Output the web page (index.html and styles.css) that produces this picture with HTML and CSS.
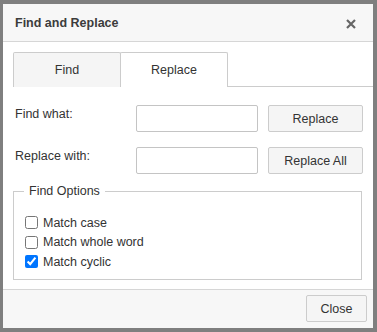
FILE: index.html
```html
<!DOCTYPE html>
<html lang="en">
<head>
    <meta charset="UTF-8">
    <meta name="viewport" content="width=device-width, initial-scale=1.0">
    <title>Find and Replace</title>
    <link rel="stylesheet" href="styles.css">
</head>
<body>
    <div class="overlay">
        <div class="dialog">
            <div class="dialog-header">
                <span class="dialog-title">Find and Replace</span>
                <svg class="dialog-close" width="10" height="10" viewBox="0 0 10 10">
                    <path d="M1 1 L9 9 M9 1 L1 9" stroke="#666" stroke-width="2.2" fill="none"/>
                </svg>
            </div>

            <div class="dialog-body">
                <ul class="tabs">
                    <li class="tab">Find</li>
                    <li class="tab active">Replace</li>
                </ul>

                <div class="form-row">
                    <label for="find-what">Find what:</label>
                    <input type="text" id="find-what">
                    <button>Replace</button>
                </div>
                <div class="form-row">
                    <label for="replace-with">Replace with:</label>
                    <input type="text" id="replace-with">
                    <button>Replace All</button>
                </div>

                <fieldset class="options">
                    <legend>Find Options</legend>
                    <label class="check"><input type="checkbox"> Match case</label>
                    <label class="check"><input type="checkbox"> Match whole word</label>
                    <label class="check"><input type="checkbox" checked> Match cyclic</label>
                </fieldset>
            </div>

            <div class="dialog-footer">
                <button>Close</button>
            </div>
        </div>
    </div>
</body>
</html>
```

FILE: styles.css
```css
html, body {
    margin: 0;
    height: 100%;
}
body {
    font-family: "Liberation Sans", Arial, sans-serif;
    font-size: 12.5px;
    color: #333;
    background-color: #7f7f7f;
}
.overlay {
    padding: 4px 4px 4px 3px;
}
.dialog {
    width: 370px;
    height: 324px;
    background-color: #fff;
    display: flex;
    flex-direction: column;
}
.dialog-header {
    height: 37px;
    background-color: #f7f7f7;
    border-bottom: 1px solid #d6d6d6;
    display: flex;
    align-items: center;
    justify-content: space-between;
    padding: 0 17px 0 12px;
}
.dialog-title {
    font-weight: bold;
    color: #3c3c3c;
}
.dialog-close {
    margin-top: 2px;
}
.dialog-body {
    flex: 1;
    padding: 10px 10px 0 0;
    margin-right: -10px;
}
.tabs {
    list-style: none;
    margin: 0 0 18px 10px;
    padding: 0;
    display: flex;
    border-bottom: 1px solid #ccc;
}
.tab {
    width: 106px;
    height: 33px;
    line-height: 34px;
    text-align: center;
    background-color: #f5f5f5;
    border: 1px solid #ccc;
    border-bottom: none;
    border-radius: 2px 2px 0 0;
    margin-bottom: -1px;
    padding-bottom: 1px;
}
.tab + .tab {
    margin-left: -1px;
}
.tab.active {
    background-color: #fff;
}
.form-row {
    display: flex;
    align-items: flex-start;
    margin: 0 0 15px 12px;
}
.form-row label {
    width: 121px;
    padding-top: 2px;
}
.form-row input {
    width: 122px;
    height: 27px;
    box-sizing: border-box;
    border: 1px solid #c4c4c4;
    border-radius: 2px;
    margin: 0 10px 0 0;
    padding: 0 4px;
}
button {
    font-family: inherit;
    font-size: 12.5px;
    color: #333;
    background-color: #f5f5f5;
    border: 1px solid #ccc;
    border-radius: 2px;
    height: 27px;
    width: 95px;
    padding: 0;
}
.options {
    margin: -5px 0 0 10px;
    width: 349px;
    box-sizing: border-box;
    border: 1px solid #ccc;
    padding: 15px 10px 7px 11px;
}
.options legend {
    padding: 0 5px;
    margin-left: -1px;
}
.check {
    display: flex;
    align-items: center;
    height: 19.5px;
}
.check input {
    width: 13px;
    height: 13px;
    margin: 0 5px 0 0;
}
.dialog-footer {
    height: 38px;
    background-color: #f7f7f7;
    border-top: 1px solid #d6d6d6;
    display: flex;
    align-items: center;
    justify-content: flex-end;
    padding-right: 6px;
}
.dialog-footer button {
    width: 61px;
    margin-top: -1px;
}
```
